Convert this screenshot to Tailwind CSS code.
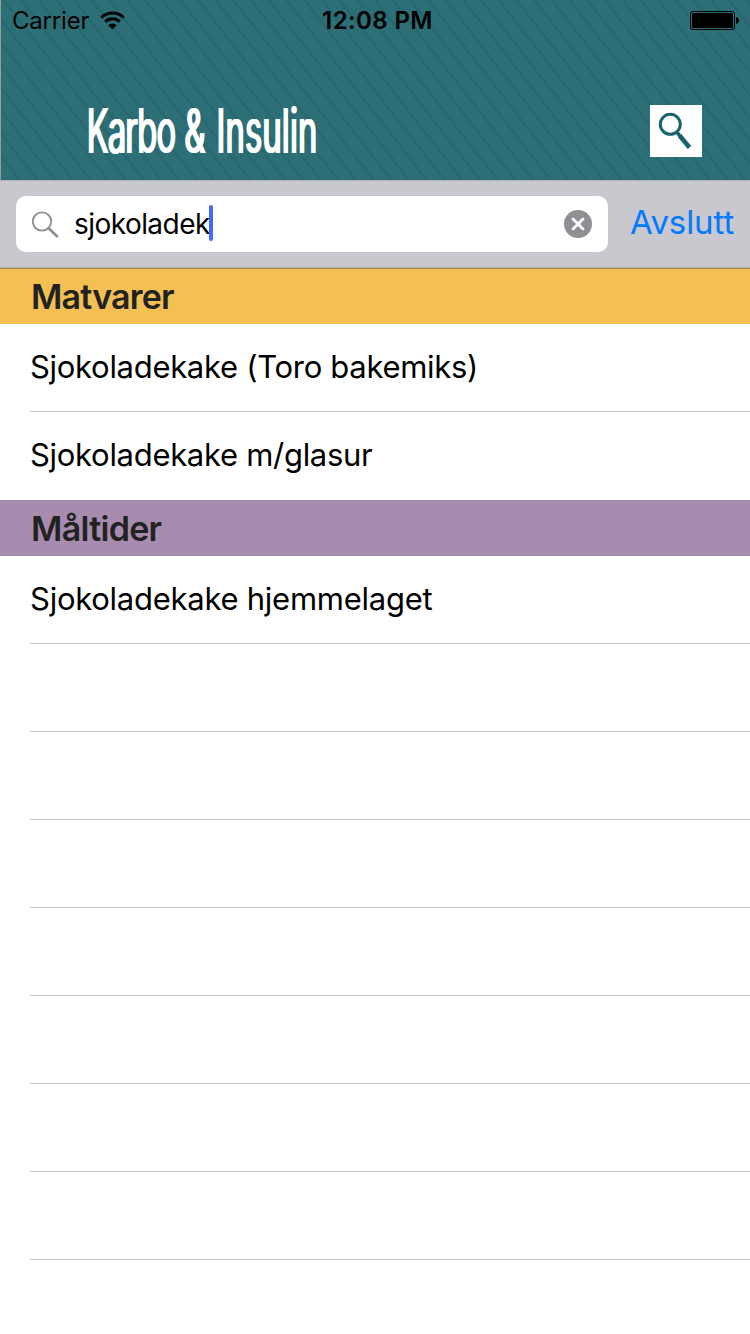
<!DOCTYPE html>
<html lang="nb">
<head>
  <meta charset="UTF-8" />
  <meta name="viewport" content="width=device-width, initial-scale=1.0"/>
  <title>Karbo &amp; Insulin</title>
  <script src="https://cdn.jsdelivr.net/npm/@tailwindcss/browser@4"></script>
</head>
<body class="w-[750px] h-[1334px] overflow-hidden bg-white text-black font-['Inter','Liberation_Sans',sans-serif]">
  <header class="relative h-[180px] bg-[#2c6f76] border-l border-[#9b9c9b] overflow-hidden">
    <!-- diagonal stripes -->
    <svg class="absolute inset-0 w-full h-full" aria-hidden="true">
      <defs>
        <pattern id="stripes" width="17.7" height="22.7" patternUnits="userSpaceOnUse" patternTransform="translate(8 7.3)">
          <path d="M-17.7 -22.7L35.4 45.4M-17.7 0L17.7 45.4M0 -22.7L35.4 22.7" stroke="#28666e" stroke-width="2"/>
        </pattern>
      </defs>
      <rect width="100%" height="100%" fill="url(#stripes)"/>
    </svg>

    <div class="relative flex h-10 items-center justify-between pl-[11px] pr-[11px]">
      <div class="flex w-[200px] items-center gap-[11px]">
        <span class="pt-[2px] text-[24px] leading-10 tracking-[-0.2px]">Carrier</span>
        <svg class="w-[25px] h-[19px]" viewBox="0 0 25 19">
          <g fill="none" stroke="#000" stroke-width="3">
            <path d="M1.3 6.6a16 16 0 0 1 22.4 0"/>
            <path d="M5.2 10.8a10.4 10.4 0 0 1 14.6 0"/>
          </g>
          <path d="M8.3 14.2a6 6 0 0 1 8.4 0L12.5 18.4z"/>
        </svg>
      </div>
      <span class="ml-1 pt-[2px] text-[24px] leading-10 font-semibold tracking-[0.4px]">12:08 PM</span>
      <div class="flex w-[200px] justify-end">
        <svg class="w-[49px] h-[19px]" viewBox="0 0 49 19">
          <rect x=".5" y=".5" width="44" height="18" rx="2.5" fill="none" stroke="#000"/>
          <rect x="2" y="2" width="41" height="15" rx="1.5"/>
          <path d="M46 6.3c4 0 4 6.4 0 6.4z"/>
        </svg>
      </div>
    </div>

    <div class="relative flex h-[140px] items-center justify-between pl-[85px] pr-[48px] pt-[42px]">
      <h1 class="w-[232px] h-[90px] whitespace-nowrap origin-left scale-x-[0.525] text-[62px] leading-[90px] font-normal text-white [text-shadow:2px_0_0_#fff,3px_0_0_#fff]"><span class="tracking-[-1.5px]">Karbo</span> &amp; <span class="ml-[4px] tracking-[0.4px]">Insulin</span></h1>
      <button class="w-[52px] h-[52px] bg-white">
        <svg class="w-[52px] h-[52px]" viewBox="0 0 52 52" fill="none" stroke="#17656c">
          <circle cx="20.3" cy="19.3" r="10" stroke-width="3"/>
          <path d="M27 27.5L31 32" stroke-width="3.5"/>
          <path d="M29.5 30.5L39.5 42.5" stroke-width="4.6"/>
        </svg>
      </button>
    </div>
  </header>

  <div class="flex h-[88px] items-center border-y border-[#b1b1b4] bg-[#c9c8ce] pl-4">
    <div class="flex h-14 w-[592px] items-center rounded-[10px] bg-white pl-4 pr-4">
      <svg class="w-[27px] h-[27px] shrink-0" viewBox="0 0 27 27" fill="none" stroke="#8e8e93">
        <circle cx="10" cy="10.5" r="9.2" stroke-width="1.8"/>
        <path d="M16.7 17.2L25 25.3" stroke-width="2.6" stroke-linecap="round"/>
      </svg>
      <span class="ml-[15px] text-[28px] leading-[54px] tracking-[-0.55px]">sjokoladek</span>
      <span class="-ml-px -mt-[3px] h-9 w-1 rounded-sm bg-[#426bf2]"></span>
      <svg class="ml-auto w-7 h-7" viewBox="0 0 28 28">
        <circle cx="14" cy="14" r="14" fill="#8e8e93"/>
        <path d="M9 9l10 10M19 9L9 19" stroke="#fff" stroke-width="2.8" stroke-linecap="round"/>
      </svg>
    </div>
    <button class="ml-[22px] -mt-[5px] text-[33px] leading-[56px] tracking-[-0.1px] text-[#007aff]">Avslutt</button>
  </div>

  <h2 class="h-14 border-t border-[#a08449] bg-[#f4bf53] pl-[31px] text-[34px] leading-[56px] font-semibold tracking-[-0.8px] text-[#222]">Matvarer</h2>
  <ul class="pl-[30px] text-[31px] leading-[85px] tracking-[-0.3px]">
    <li class="h-[88px] border-b border-[#c8c7cc]">Sjokoladekake (Toro bakemiks)</li>
    <li class="h-[88px]">Sjokoladekake m/glasur</li>
  </ul>

  <h2 class="h-14 bg-[#a88cb0] pl-[31px] text-[34px] leading-[58px] font-semibold tracking-[-0.7px] text-[#222]">Måltider</h2>
  <ul class="pl-[30px] text-[31px] leading-[85px] tracking-[-0.26px]">
    <li class="h-[88px] border-b border-[#c8c7cc]">Sjokoladekake hjemmelaget</li>
    <li class="h-[88px] border-b border-[#c8c7cc]"></li>
    <li class="h-[88px] border-b border-[#c8c7cc]"></li>
    <li class="h-[88px] border-b border-[#c8c7cc]"></li>
    <li class="h-[88px] border-b border-[#c8c7cc]"></li>
    <li class="h-[88px] border-b border-[#c8c7cc]"></li>
    <li class="h-[88px] border-b border-[#c8c7cc]"></li>
    <li class="h-[88px] border-b border-[#c8c7cc]"></li>
  </ul>
</body>
</html>
